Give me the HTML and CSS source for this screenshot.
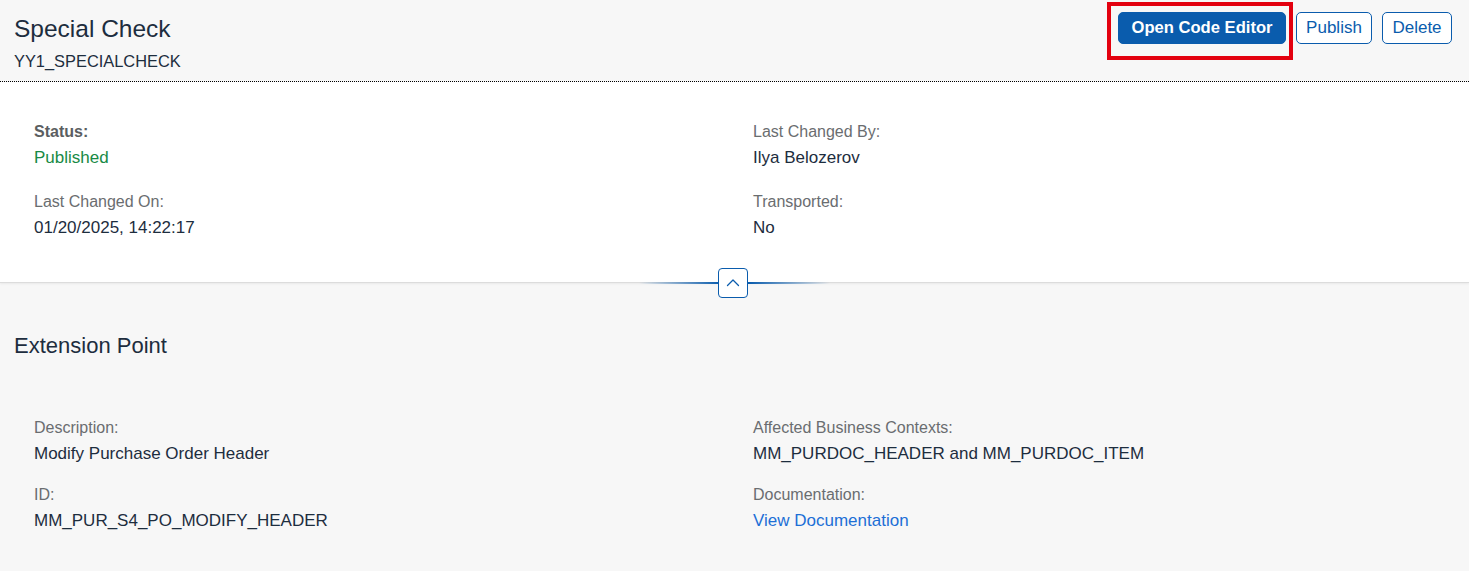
FILE: index.html
```html
<!DOCTYPE html>
<html lang="en">
<head>
<meta charset="utf-8">
<title>Special Check</title>
<link rel="stylesheet" href="styles.css">
</head>
<body>
<div class="page">
  <header class="obj-header">
    <div class="titles">
      <h1 class="title">Special Check</h1>
      <div class="subtitle">YY1_SPECIALCHECK</div>
    </div>
    <div class="actions">
      <span class="highlight"><button class="btn btn-primary">Open Code Editor</button></span>
      <button class="btn btn-ghost btn-publish">Publish</button>
      <button class="btn btn-ghost btn-delete">Delete</button>
    </div>
  </header>

  <section class="header-content">
    <div class="fields">
      <div class="col">
        <div class="field">
          <div class="label label-bold">Status:</div>
          <div class="value value-positive">Published</div>
        </div>
        <div class="field">
          <div class="label">Last Changed On:</div>
          <div class="value">01/20/2025, 14:22:17</div>
        </div>
      </div>
      <div class="col">
        <div class="field">
          <div class="label">Last Changed By:</div>
          <div class="value">Ilya Belozerov</div>
        </div>
        <div class="field">
          <div class="label">Transported:</div>
          <div class="value">No</div>
        </div>
      </div>
    </div>
    <div class="collapse-bar">
      <button class="collapse-btn" aria-label="Collapse header">
        <svg width="16" height="16" viewBox="0 0 16 16" aria-hidden="true">
          <path d="M2.5 10.5 L8 5 L13.5 10.5" fill="none" stroke="#0a5cad" stroke-width="1.3" stroke-linecap="round" stroke-linejoin="round"/>
        </svg>
      </button>
    </div>
  </section>

  <section class="section">
    <h2 class="section-title">Extension Point</h2>
    <div class="fields">
      <div class="col">
        <div class="field">
          <div class="label">Description:</div>
          <div class="value">Modify Purchase Order Header</div>
        </div>
        <div class="field">
          <div class="label">ID:</div>
          <div class="value">MM_PUR_S4_PO_MODIFY_HEADER</div>
        </div>
      </div>
      <div class="col">
        <div class="field">
          <div class="label">Affected Business Contexts:</div>
          <div class="value">MM_PURDOC_HEADER and MM_PURDOC_ITEM</div>
        </div>
        <div class="field">
          <div class="label">Documentation:</div>
          <div class="value"><a class="link" href="#">View Documentation</a></div>
        </div>
      </div>
    </div>
  </section>
</div>
</body>
</html>
```

FILE: styles.css
```css
* { box-sizing: border-box; }

html, body {
  margin: 0;
  padding: 0;
  background: #f7f7f7;
  font-family: "Liberation Sans", Arial, sans-serif;
  color: #1d2d3e;
}

.page {
  width: 1469px;
  min-height: 571px;
  overflow: hidden;
}

/* ---------- object header ---------- */
.obj-header {
  display: flex;
  justify-content: space-between;
  align-items: flex-start;
  background: #f7f7f7;
  padding: 12px 17px 9px 14px;
  border-bottom: 1px dotted #000;
  height: 82px;
}

.titles {
  padding-top: 2px;
}

.title {
  margin: 0;
  font-size: 24.5px;
  line-height: 30px;
  font-weight: normal;
  color: #1d2d3e;
}

.subtitle {
  margin-top: 6px;
  font-size: 16.4px;
  line-height: 22px;
  color: #1d2d3e;
}

.actions {
  display: flex;
  gap: 10px;
  align-items: center;
}

.highlight {
  position: relative;
  display: inline-flex;
}

.highlight::after {
  content: "";
  position: absolute;
  top: -10px;
  left: -11px;
  right: -7px;
  bottom: -16px;
  border: 4px solid #e3000f;
  pointer-events: none;
}

.btn {
  height: 32px;
  border-radius: 5px;
  font-family: "Liberation Sans", Arial, sans-serif;
  cursor: pointer;
  white-space: nowrap;
}

.btn-primary {
  background: #0a5cad;
  border: 1px solid #0a5cad;
  color: #fff;
  font-weight: bold;
  font-size: 16.6px;
  padding: 0 8px;
  width: 168px;
}

.btn-ghost {
  background: #fff;
  border: 1px solid #0a5cad;
  color: #0a5cad;
  font-size: 17px;
  padding: 0 9px;
}

.btn-publish { width: 76px; }
.btn-delete { width: 70px; }

/* ---------- header content ---------- */
.header-content {
  position: relative;
  background: #fff;
  padding: 37px 34px 41px 34px;
  border-bottom: 1px solid #dcdcdc;
  box-shadow: 0 1px 2px rgba(0, 0, 0, 0.06);
}

.fields {
  display: grid;
  grid-template-columns: 681px 681px;
  column-gap: 38px;
}

.col {
  display: flex;
  flex-direction: column;
  gap: 18px;
}

.label {
  font-size: 16px;
  line-height: 26px;
  color: #6a6d70;
}

.label-bold {
  font-weight: bold;
  color: #5b5e61;
}

.value {
  font-size: 17px;
  line-height: 26px;
  color: #1d2d3e;
}

.value-positive {
  color: #188a45;
}

.link {
  color: #1d6fd6;
  text-decoration: none;
}

.collapse-bar {
  position: absolute;
  left: 0;
  right: 0;
  bottom: -2px;
  height: 2px;
  background: linear-gradient(to right,
    rgba(10, 92, 173, 0) 43.5%,
    rgba(10, 92, 173, 1) 49%,
    rgba(10, 92, 173, 1) 51%,
    rgba(10, 92, 173, 0) 56.5%);
  display: flex;
  justify-content: center;
  align-items: center;
}

.collapse-btn {
  width: 30px;
  height: 30px;
  margin-left: -3px;
  background: #fff;
  border: 1px solid #0a5cad;
  border-radius: 4px;
  display: flex;
  align-items: center;
  justify-content: center;
  padding: 0;
  cursor: pointer;
}

/* ---------- section ---------- */
.section {
  padding: 48px 34px 20px 14px;
}

.section-title {
  margin: 0 0 54px 0;
  font-size: 22px;
  line-height: 30px;
  font-weight: normal;
  color: #1d2d3e;
}

.section .fields {
  padding-left: 20px;
}

.section .col {
  gap: 15px;
}
```
